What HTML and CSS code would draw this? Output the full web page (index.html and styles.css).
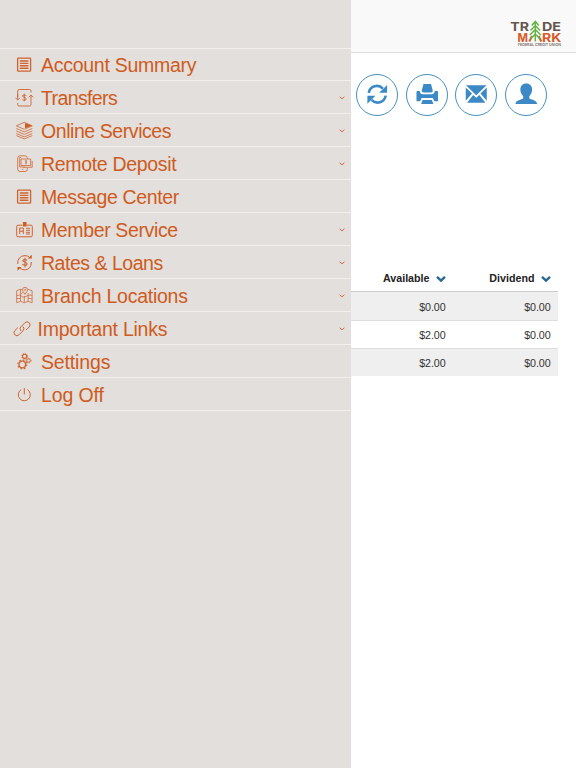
FILE: index.html
```
<!DOCTYPE html>
<html lang="en">
<head>
<meta charset="utf-8">
<title>Account Summary</title>
<link rel="stylesheet" href="styles.css">
</head>
<body>
<svg class="defs" aria-hidden="true">
  <symbol id="list" viewBox="0 0 20 20"><rect x="3.600" y="3.100" width="13" height="13" rx=".7"/><path d="M5.800 6h8.600M5.800 8.400h8.600M5.800 10.800h8.600M5.800 13.200h8.600" stroke-width="1.400"/></symbol>
  <symbol id="chev" viewBox="0 0 6 4"><path d="M.6 .8 3 2.800 5.400 .8"/></symbol>
  <symbol id="sort" viewBox="0 0 10 8"><path d="M1 1.800 5 5.600 9 1.800"/></symbol>
</svg>
<div class="app">
  <nav class="menu">
    <div class="menu-top"></div>
    <a class="item first"><svg class="icon bold"><use href="#list"/></svg><span class="l1">Account Summary</span></a>
    <a class="item"><svg class="icon" viewBox="0 0 20 20"><path d="M3.700 9V3q0-1.500 1.500-1.500h10.300q1.500 0 1.500 1.500v1.500M3.700 11.500V6M1.500 9.800l2.200 2.300 2.200-2.300M3.700 15v1.500q0 1.500 1.500 1.500h10.300q1.500 0 1.500-1.500V7M14.800 9.300l2.200-2.300 2.200 2.300"/><path d="M12.400 7.700q-2-1.400-3.700-.3c-1.300 1.800 3.600 1.900 3.500 3.600-.2 1.800-2.500 1.600-3.900.6M10.300 5.700v7.600"/></svg><span class="l2">Transfers</span><svg class="chev"><use href="#chev"/></svg></a>
    <a class="item"><svg class="icon" viewBox="0 0 20 20"><path d="M2.300 4.800 10.300 1.300l8 3.500-8 3.500zM2.300 7.500l8 3.400 8-3.400M2.300 10l8 3.400 8-3.400M2.300 12.500l8 3.400 8-3.400M2.300 14.600l8 3.300 8-3.300" stroke-width=".8"/><path class="solid" d="M11 2l6.800 2.800-6.800 2.400z"/></svg><span class="l3">Online Services</span><svg class="chev"><use href="#chev"/></svg></a>
    <a class="item"><svg class="icon" viewBox="0 0 20 20"><path d="M13.300 4.500V4q0-2.200-2.200-2.200H6Q3.700 1.800 3.700 4v11.200q0 2.300 2.300 2.300h5q2.300 0 2.300-2.300V14M7 3.500H5.700V13h5M8 15.300h1.300" stroke-width=".8"/><path d="M7 5h9.700v6.500H7zM9.300 13.300h8.900V7" stroke-width=".8"/><path d="M12.700 6.800q-1.700-.3-1.200.8l1 .6q.5 1.100-1.200.9M12 6v4.500" stroke-width=".7"/></svg><span class="l4">Remote Deposit</span><svg class="chev"><use href="#chev"/></svg></a>
    <a class="item"><svg class="icon bold"><use href="#list"/></svg><span class="l5">Message Center</span></a>
    <a class="item"><svg class="icon" viewBox="0 0 20 20"><path d="M8.500 5.200H4q-1.300 0-1.300 1.300v9q0 1.300 1.300 1.300h13q1.300 0 1.300-1.300v-9q0-1.300-1.300-1.300h-4.500M5.700 14V8H9.300v6M5.700 11.200h3.600M12 8.300h4M12 10.300h4M12 12.300h4M12 14h4" stroke-width="1"/><path class="solid" d="M9 2h3.500v4.500H9z"/></svg><span class="l6">Member Service</span><svg class="chev"><use href="#chev"/></svg></a>
    <a class="item"><svg class="icon" viewBox="0 0 20 20"><path d="M3.700 11Q3.400 3 11 2.600q3 0 5 2.300M17.300 9q.1 7.500-6.600 7.900-3 0-5-2.300" stroke-width="1"/><path class="solid" d="M13.800 5.500h4V1.700zM7.500 14H3.500v3.800z"/><path d="M13.200 7.300q-2-1.400-3.900-.5c-2 2.100 4 2.200 3.800 4.300-.3 1.900-3.100 1.400-4.700.2M11 4.800v9.700" stroke-width="1.100"/></svg><span class="l7">Rates &amp; Loans</span><svg class="chev"><use href="#chev"/></svg></a>
    <a class="item"><svg class="icon" viewBox="0 0 20 20"><path d="M8 3.800 6.500 3.300 2.700 4.700v12l3.800-1.300 3.800 1.300 3.800-1.300 4 1.300v-12l-4-1.400M6.500 3.300v12M14.100 7v8.400M10.300 10v6.500M2.700 9.500q3-1 4.500.5t3.100 1 3.800-1.500 4 0M2.700 12.500h3.800M14 12l4 1M7 8l2-1.500" stroke-width=".75"/><path d="M11 8.300Q8.300 5 8.500 3.800a2.500 2.500 0 0 1 5 0Q13.700 5 11 8.300z" stroke-width=".8"/><circle cx="11" cy="3.800" r=".7" stroke-width=".6"/></svg><span class="l8">Branch Locations</span><svg class="chev"><use href="#chev"/></svg></a>
    <a class="item link"><svg class="icon" viewBox="0 0 20 20"><path d="M9 12q-2-2.300 0-4.300l4-4q2-2 4.200 0 1.900 2.200 0 4.200L14 11.100M11 7.500q2 2.300 0 4.300l-4 4q-2 2-4.200 0-1.900-2.200 0-4.200L6 8.500" stroke-width="1"/></svg><span class="l9">Important Links</span><svg class="chev"><use href="#chev"/></svg></a>
    <a class="item"><svg class="icon" viewBox="0 0 20 20"><circle cx="8.300" cy="12.500" r="3.300" stroke-width="1.300"/><circle cx="8.300" cy="12.500" r="4.500" stroke-width="1.100" stroke-dasharray="1.700 1.834"/><circle cx="10.600" cy="4.300" r="2.100" stroke-width="1.100"/><circle cx="10.600" cy="4.300" r="2.900" stroke-dasharray="1.200 1.078"/><circle cx="14.600" cy="8.500" r="1.700"/><circle cx="14.600" cy="8.500" r="2.400" stroke-dasharray="1 .885"/></svg><span class="l10">Settings</span></a>
    <a class="item"><svg class="icon" viewBox="0 0 20 20"><path d="M7.200 4.600a6 6 0 1 0 6.200 0M10.300 3v6.500" stroke-width="1"/></svg><span class="l11">Log Off</span></a>
  </nav>
  <main class="page">
    <header class="top">
      <svg class="logo" viewBox="0 0 52 28" role="img" aria-label="Trademark Federal Credit Union">
        <g class="gray"><text x=".3" y="12.200" textLength="18.700" lengthAdjust="spacingAndGlyphs">TR</text><text x="32" y="12.200" textLength="19" lengthAdjust="spacingAndGlyphs">DE</text></g>
        <g class="orange"><text x="7.500" y="22.500" textLength="10.500" lengthAdjust="spacingAndGlyphs">M</text><text x="32" y="22.500" textLength="19.300" lengthAdjust="spacingAndGlyphs">RK</text><path d="M19.300 22.500l2.700-5.500M31.300 22.500l-2.700-5.500"/></g>
        <path class="tree" d="M25.300 4v18.500M21.800 6.600l3.500-4.200 3.500 4.200M20.500 11.500l4.800-5 4.800 5M19.800 16l5.500-5.500 5.500 5.500M20.500 20l4.800-5 4.800 5"/>
        <text class="sub" x="8" y="27" textLength="43">FEDERAL CREDIT UNION</text>
      </svg>
    </header>
    <div class="actions">
      <a class="round"><svg viewBox="0 0 24 24"><path class="ring" d="M3 10.500a8.700 8.700 0 0 1 15-4.500M21 13.500a8.700 8.700 0 0 1-15 4.500"/><path d="M22.500 2v8.500H14zM1.500 22v-8.500H10z"/></svg></a>
      <a class="round"><svg viewBox="0 0 24 24"><path d="M6 8.500 8 1h8l2 7.500q-.5 1.500-2 1.500H8q-1.500 0-2-1.500zM1.500 8.500H4q.5 3.500 3 3.500h10q2.500 0 3-3.500h2.500q1 0 1 1v10h-4L18 16H6l-1.500 3.500h-4v-10q0-1 1-1zM7 18h10l1.500 4.500h-13z"/></svg></a>
      <a class="round"><svg viewBox="0 0 24 24"><path d="M1 2.500h22L12 13zM.8 4.800l6.700 6.500L.8 19zM23.200 4.800V19l-6.700-7.700zM8.700 12.700 12 15.800l3.300-3.100 6.500 8.300H2.200z"/></svg></a>
      <a class="round"><svg viewBox="0 0 24 24"><path d="M12 .5c4 0 6.300 2.700 6.300 6.500 0 3-1.300 5.500-3 7v2.500c3 1.500 8.200 2 8.200 6H.5c0-4 5.200-4.500 8.200-6V14c-1.700-1.500-3-4-3-7C5.700 3.200 8 .5 12 .5z"/></svg></a>
    </div>
    <table class="accounts">
      <thead><tr><th>Available<svg><use href="#sort"/></svg></th><th>Dividend<svg><use href="#sort"/></svg></th></tr></thead>
      <tbody>
        <tr><td>$0.00</td><td>$0.00</td></tr>
        <tr><td>$2.00</td><td>$0.00</td></tr>
        <tr><td>$2.00</td><td>$0.00</td></tr>
      </tbody>
    </table>
  </main>
</div>
</body>
</html>
```
FILE: styles.css
```
* { box-sizing: border-box; }
body { margin: 0; background: #fff; font-family: "Liberation Sans", Arial, sans-serif; }
.defs { display: none; }
.app { display: flex; height: 768px; overflow: hidden; }
.menu { width: 351px; flex: none; background: #e3dfdc; color: #cf5b20; }
.menu-top { height: 49px; border-bottom: 1px solid #f3f1ef; }
.item { display: flex; align-items: center; height: 33px; padding: 1px 6px 0 14px; border-bottom: 1px solid #f3f1ef; font-size: 19.500px; line-height: 30px; white-space: nowrap; }
.first { height: 32px; }
.item span { margin-left: 7px; }
.l1 { letter-spacing: -.27px; }
.l2 { letter-spacing: -.62px; }
.l3 { letter-spacing: -.43px; }
.l4 { letter-spacing: -.32px; }
.l5 { letter-spacing: -.37px; }
.l6 { letter-spacing: -.37px; }
.l7 { letter-spacing: -.48px; }
.l8 { letter-spacing: -.25px; }
.l9 { letter-spacing: -.24px; }
.l10 { letter-spacing: -.15px; }
.l11 { letter-spacing: -.1px; }
.icon { width: 20px; height: 20px; flex: none; fill: none; stroke: #cf6431; stroke-width: .9; }
.bold { stroke-width: 1.300; }
.icon .solid { fill: #cf5b20; stroke: none; }
.link { padding-left: 12px; }
.item.link span { margin-left: 5.500px; }
.chev { width: 6px; height: 4px; margin-left: auto; fill: none; stroke: #cf6c40; stroke-width: 1; }
.page { flex: 1; min-width: 0; }
.top { display: flex; justify-content: flex-end; height: 53px; padding: 19px 14px 0 0; background: #f9f9f9; border-bottom: 1px solid #dcdcdc; }
.logo { width: 52px; height: 28px; font-family: Inter, "Liberation Sans", sans-serif; font-weight: 700; font-size: 12px; }
.gray { fill: #62564f; }
.orange { fill: #d75b2c; }
.orange path { stroke: #d75b2c; stroke-width: 2; }
.tree { fill: none; stroke: #65b345; stroke-width: 1.500; }
.sub { font-size: 3.600px; font-weight: 600; fill: #756b65; }
.actions { display: flex; gap: 7.500px; padding: 20.500px 0 0 5.300px; height: 62px; }
.round { display: flex; flex: none; align-items: center; justify-content: center; width: 42px; height: 42px; border: 1px solid #4a8fbd; border-radius: 50%; }
.round svg { width: 22.500px; height: 22.500px; fill: #3c89c6; }
.round .ring { fill: none; stroke: #3c89c6; stroke-width: 2.800; }
.accounts { width: 207px; margin-top: 148px; border-collapse: separate; border-spacing: 0; table-layout: fixed; font-size: 10.700px; color: #333; }
.accounts th, .accounts td { padding: 0 7.500px 0 0; text-align: right; }
.accounts th:first-child { width: 102px; }
.accounts th { height: 29px; padding-top: 2px; border-bottom: 1px solid #ccc; color: #222; white-space: nowrap; }
.accounts th svg { width: 10px; height: 8px; margin-left: 6px; vertical-align: -1px; fill: none; stroke: #286891; stroke-width: 2.400; }
.accounts td { height: 28px; padding-top: 1px; border-top: 1px solid #ddd; letter-spacing: -.1px; }
.accounts tbody tr:first-child td { border-top: 0; }
.accounts tbody tr:nth-child(odd) { background: #efefef; }
```
